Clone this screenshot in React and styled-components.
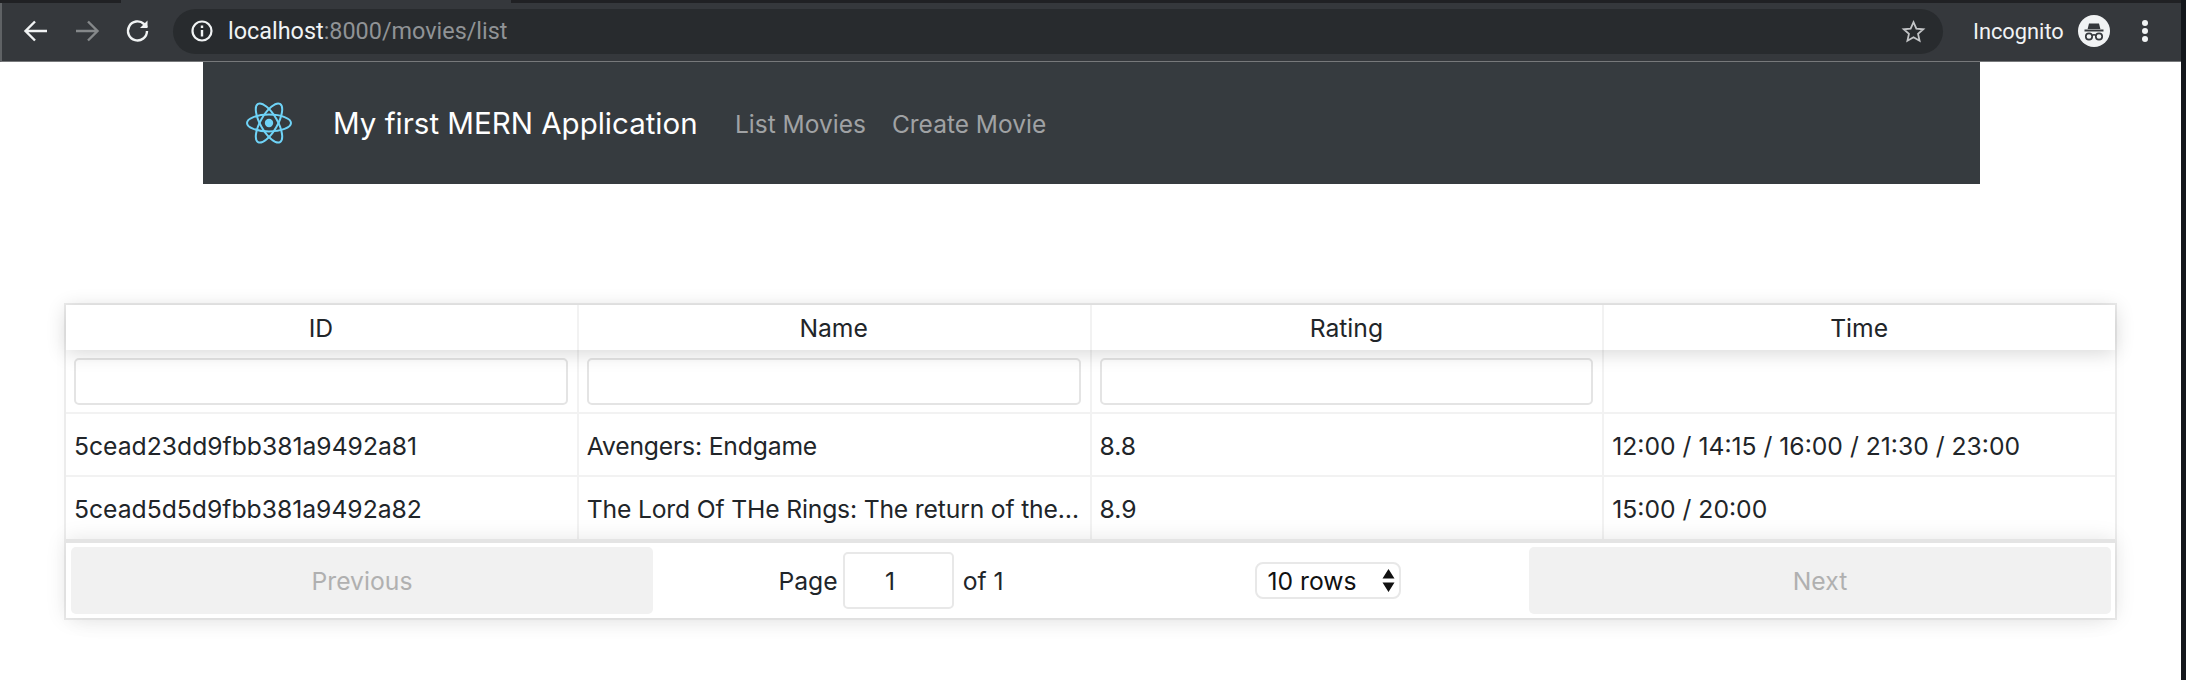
import React from "react";
import styled, { createGlobalStyle } from "styled-components";

const GlobalStyle = createGlobalStyle`
  html, body {
    margin: 0;
    padding: 0;
    background: #fff;
  }
  * {
    box-sizing: border-box;
  }
`;

const Window = styled.div`
  width: 2186px;
  height: 680px;
  overflow: hidden;
  border-right: 5px solid #14171c;
  background: #fff;
  font-family: Inter, Roboto, "Liberation Sans", sans-serif;
  color: #212529;
`;

const TabStrip = styled.div`
  height: 3px;
  background: #35383c;
  display: flex;
  justify-content: space-between;
`;

const TabGap = styled.div`
  background: #202124;
  height: 100%;
  width: ${props => props.$w};
`;

const Toolbar = styled.div`
  height: 59px;
  background: #35383c;
  border-left: 2px solid #5f6265;
  border-bottom: 1px solid #77797b;
  display: flex;
  align-items: center;
  padding: 0 0 2px 0;
  font-family: Roboto, "Liberation Sans", sans-serif;
`;

const NavIcon = styled.svg`
  width: 28px;
  height: 28px;
  flex: none;
  margin-left: ${props => props.$ml};
  fill: none;
  stroke: ${props => props.$dim ? "#85888a" : "#f1f3f4"};
  stroke-width: 2.4;
`;

const Omnibox = styled.div`
  margin-left: 21px;
  width: 1770px;
  height: 45px;
  border-radius: 23px;
  background: #282b2e;
  display: flex;
  align-items: center;
  padding: 0 13px 0 17px;
  font-size: 23.4px;
`;

const InfoIcon = styled.svg`
  width: 24px;
  height: 24px;
  flex: none;
  fill: none;
  stroke: #f1f3f4;
`;

const Url = styled.div`
  margin-left: 14px;
  color: #f1f3f4;
  flex: 1;
  span {
    color: #909396;
  }
`;

const Star = styled.svg`
  width: 25px;
  height: 25px;
  flex: none;
  margin-right: 4px;
  fill: none;
  stroke: #c3c5c7;
  stroke-width: 2;
`;

const Incognito = styled.div`
  margin-left: 30px;
  color: #f1f3f4;
  font-size: 21.8px;
  width: 90px;
  white-space: nowrap;
`;

const Avatar = styled.svg`
  width: 32px;
  height: 32px;
  flex: none;
  margin-left: 15px;
`;

const Dots = styled.svg`
  width: 8px;
  height: 28px;
  flex: none;
  margin-left: 31px;
  fill: #f1f3f4;
`;

const Container = styled.div`
  width: 1777px;
  margin-left: 203px;
`;

const Navbar = styled.nav`
  height: 122px;
  background: #363b3f;
  display: flex;
  align-items: center;
  padding-left: 42px;
`;

const Logo = styled.svg`
  width: 46px;
  height: 42px;
  flex: none;
  margin-left: 1px;
`;

const Brand = styled.div`
  margin-left: 41px;
  color: #fff;
  font-size: 29.5px;
  width: 364px;
  white-space: nowrap;
`;

const NavLink = styled.div`
  margin-left: ${props => props.$ml};
  padding-top: 2px;
  color: #a0a2a4;
  font-size: 24.5px;
  white-space: nowrap;
`;

const TableWrap = styled.div`
  margin: 119px 0 0 64px;
  width: 2053px;
  border: 2px solid #ececec;
  box-shadow: 0 12px 24px -12px rgba(0, 0, 0, 0.06);
`;

const Row = styled.div`
  display: flex;
  height: ${props => props.$h};
  border-bottom: ${props => props.$last ? "none" : "2px solid #f2f2f2"};
`;

const HeadRow = styled(Row)`
  position: relative;
  z-index: 2;
  background: #fff;
  border-bottom: none;
  box-shadow: 0 3px 20px rgba(0, 0, 0, 0.16);
`;

const Cell = styled.div`
  flex: 1 1 0;
  min-width: 0;
  display: flex;
  align-items: center;
  justify-content: ${props => props.$head ? "center" : "flex-start"};
  padding: ${props => props.$head ? "1px" : "2px"} 9px 0 8px;
  font-size: 24.7px;
  border-right: 2px solid #f2f2f2;
  white-space: nowrap;
  overflow: hidden;
  &:last-child {
    border-right: none;
  }
`;

const FilterCell = styled(Cell)`
  padding-top: 0;
`;

const Clip = styled.span`
  overflow: hidden;
  text-overflow: ellipsis;
  letter-spacing: -0.17px;
`;

const FilterInput = styled.input`
  width: 100%;
  height: 47px;
  border: 2px solid #e4e4e4;
  border-radius: 5px;
  background: #fff;
  outline: none;
`;

const Pagination = styled.div`
  position: relative;
  z-index: 2;
  height: 79px;
  background: #fff;
  border-top: 4px solid #e4e4e4;
  box-shadow: 0 0 20px rgba(0, 0, 0, 0.1);
  display: flex;
  align-items: stretch;
  padding: 4px 4px 4px 5px;
`;

const PageButton = styled.div`
  flex: 1 1 0;
  border-radius: 5px;
  background: #f1f1f1;
  color: #b0b0b0;
  font-size: 24.7px;
  display: flex;
  align-items: center;
  justify-content: center;
`;

const PageCenter = styled.div`
  flex: 1.5 1 0;
  display: flex;
  align-items: center;
  justify-content: space-around;
  font-size: 24.7px;
  padding-right: 3px;
`;

const PageInfo = styled.div`
  display: flex;
  align-items: center;
  white-space: nowrap;
`;

const PageInput = styled.input`
  width: 111px;
  height: 57px;
  margin: 0 9px 0 5px;
  border: 2px solid #e8e8e8;
  border-radius: 5px;
  font: inherit;
  color: #212529;
  text-align: center;
  outline: none;
  padding: 0 16px 0 0;
`;

const SelectWrap = styled.div`
  position: relative;
  width: 146px;
  height: 37px;
`;

const RowSelect = styled.select`
  appearance: none;
  width: 100%;
  height: 100%;
  border: 2px solid #e8e8e8;
  border-radius: 8px;
  background: #fff;
  font: inherit;
  color: #111;
  padding: 0 0 0 11px;
  outline: none;
`;

const SelectArrows = styled.svg`
  position: absolute;
  right: 6px;
  top: 7px;
  width: 13px;
  height: 23px;
  fill: #111;
  pointer-events: none;
`;

const rows = [
  { id: "5cead23dd9fbb381a9492a81", name: "Avengers: Endgame", rating: "8.8", time: "12:00 / 14:15 / 16:00 / 21:30 / 23:00" },
  { id: "5cead5d5d9fbb381a9492a82", name: "The Lord Of THe Rings: The return of the King", rating: "8.9", time: "15:00 / 20:00" },
];

function ReactLogo() {
  return (
    <Logo viewBox="0 0 46 42" fill="none" stroke="#6fd3f7" strokeWidth="2">
      <circle cx="23" cy="21" r="4.2" fill="#6fd3f7" stroke="none" />
      <ellipse cx="23" cy="21" rx="22" ry="8.4" />
      <ellipse cx="23" cy="21" rx="22" ry="8.4" transform="rotate(60 23 21)" />
      <ellipse cx="23" cy="21" rx="22" ry="8.4" transform="rotate(120 23 21)" />
    </Logo>
  );
}

function BrowserBar() {
  return (
    <>
      <TabStrip>
        <TabGap $w="121px" />
        <TabGap $w="1670px" />
      </TabStrip>
      <Toolbar>
        <NavIcon $ml="20px" viewBox="0 0 28 28">
          <path d="M25 14H4M13 4.5L3.5 14l9.5 9.5" />
        </NavIcon>
        <NavIcon $ml="23px" $dim viewBox="0 0 28 28">
          <path d="M3 14h21M15 4.5l9.5 9.5-9.5 9.5" />
        </NavIcon>
        <NavIcon $ml="23px" viewBox="0 0 28 28">
          <path d="M23 14a9.5 9.5 0 1 1-3-7l3 3" />
          <path d="M23.5 3.5v7.5H16" fill="#f1f3f4" stroke="none" />
        </NavIcon>
        <Omnibox>
          <InfoIcon viewBox="0 0 24 24">
            <circle cx="12" cy="12" r="9.5" strokeWidth="2.2" />
            <path d="M12 11v6.5M12 6.5v2.5" strokeWidth="2.4" />
          </InfoIcon>
          <Url>localhost<span>:8000/movies/list</span></Url>
          <Star viewBox="0 0 28 28">
            <path d="M14 3.5l3.2 7.2 7.8.8-5.9 5.2 1.7 7.7L14 20.4l-6.8 4 1.7-7.7L3 11.5l7.8-.8z" />
          </Star>
        </Omnibox>
        <Incognito>Incognito</Incognito>
        <Avatar viewBox="0 0 32 32">
          <circle cx="16" cy="16" r="16" fill="#f1f3f4" />
          <path d="M11 8.5h10l1.4 5.5H9.6z" fill="#35383c" />
          <path d="M6.5 15.5h19" stroke="#35383c" strokeWidth="2" />
          <circle cx="11" cy="21.5" r="3.2" fill="none" stroke="#35383c" strokeWidth="1.7" />
          <circle cx="21" cy="21.5" r="3.2" fill="none" stroke="#35383c" strokeWidth="1.7" />
          <path d="M14 20.5c1.2-.8 2.8-.8 4 0" fill="none" stroke="#35383c" strokeWidth="1.5" />
        </Avatar>
        <Dots viewBox="0 0 8 28">
          <circle cx="4" cy="6" r="3" />
          <circle cx="4" cy="14" r="3" />
          <circle cx="4" cy="22" r="3" />
        </Dots>
      </Toolbar>
    </>
  );
}

function App() {
  return (
    <Window>
      <GlobalStyle />
      <BrowserBar />
      <Container>
        <Navbar>
          <ReactLogo />
          <Brand>My first MERN Application</Brand>
          <NavLink $ml="38px">List Movies</NavLink>
          <NavLink $ml="26px">Create Movie</NavLink>
        </Navbar>
      </Container>
      <TableWrap>
        <HeadRow $h="45px">
          <Cell $head>ID</Cell>
          <Cell $head>Name</Cell>
          <Cell $head>Rating</Cell>
          <Cell $head>Time</Cell>
        </HeadRow>
        <Row $h="64px">
          <FilterCell><FilterInput /></FilterCell>
          <FilterCell><FilterInput /></FilterCell>
          <FilterCell><FilterInput /></FilterCell>
          <FilterCell />
        </Row>
        {rows.map((r, i) => (
          <Row key={r.id} $h={i === 0 ? "63px" : "62px"} $last={i === rows.length - 1}>
            <Cell>{r.id}</Cell>
            <Cell><Clip>{r.name}</Clip></Cell>
            <Cell>{r.rating}</Cell>
            <Cell>{r.time}</Cell>
          </Row>
        ))}
        <Pagination>
          <PageButton>Previous</PageButton>
          <PageCenter>
            <PageInfo>
              Page<PageInput defaultValue="1" />of 1
            </PageInfo>
            <SelectWrap>
              <RowSelect defaultValue="10">
                <option value="10">10 rows</option>
              </RowSelect>
              <SelectArrows viewBox="0 0 13 23">
                <path d="M6.5 0L12.5 9.5H.5zM6.5 23L.5 13.5h12z" />
              </SelectArrows>
            </SelectWrap>
          </PageCenter>
          <PageButton>Next</PageButton>
        </Pagination>
      </TableWrap>
    </Window>
  );
}

export default App;
